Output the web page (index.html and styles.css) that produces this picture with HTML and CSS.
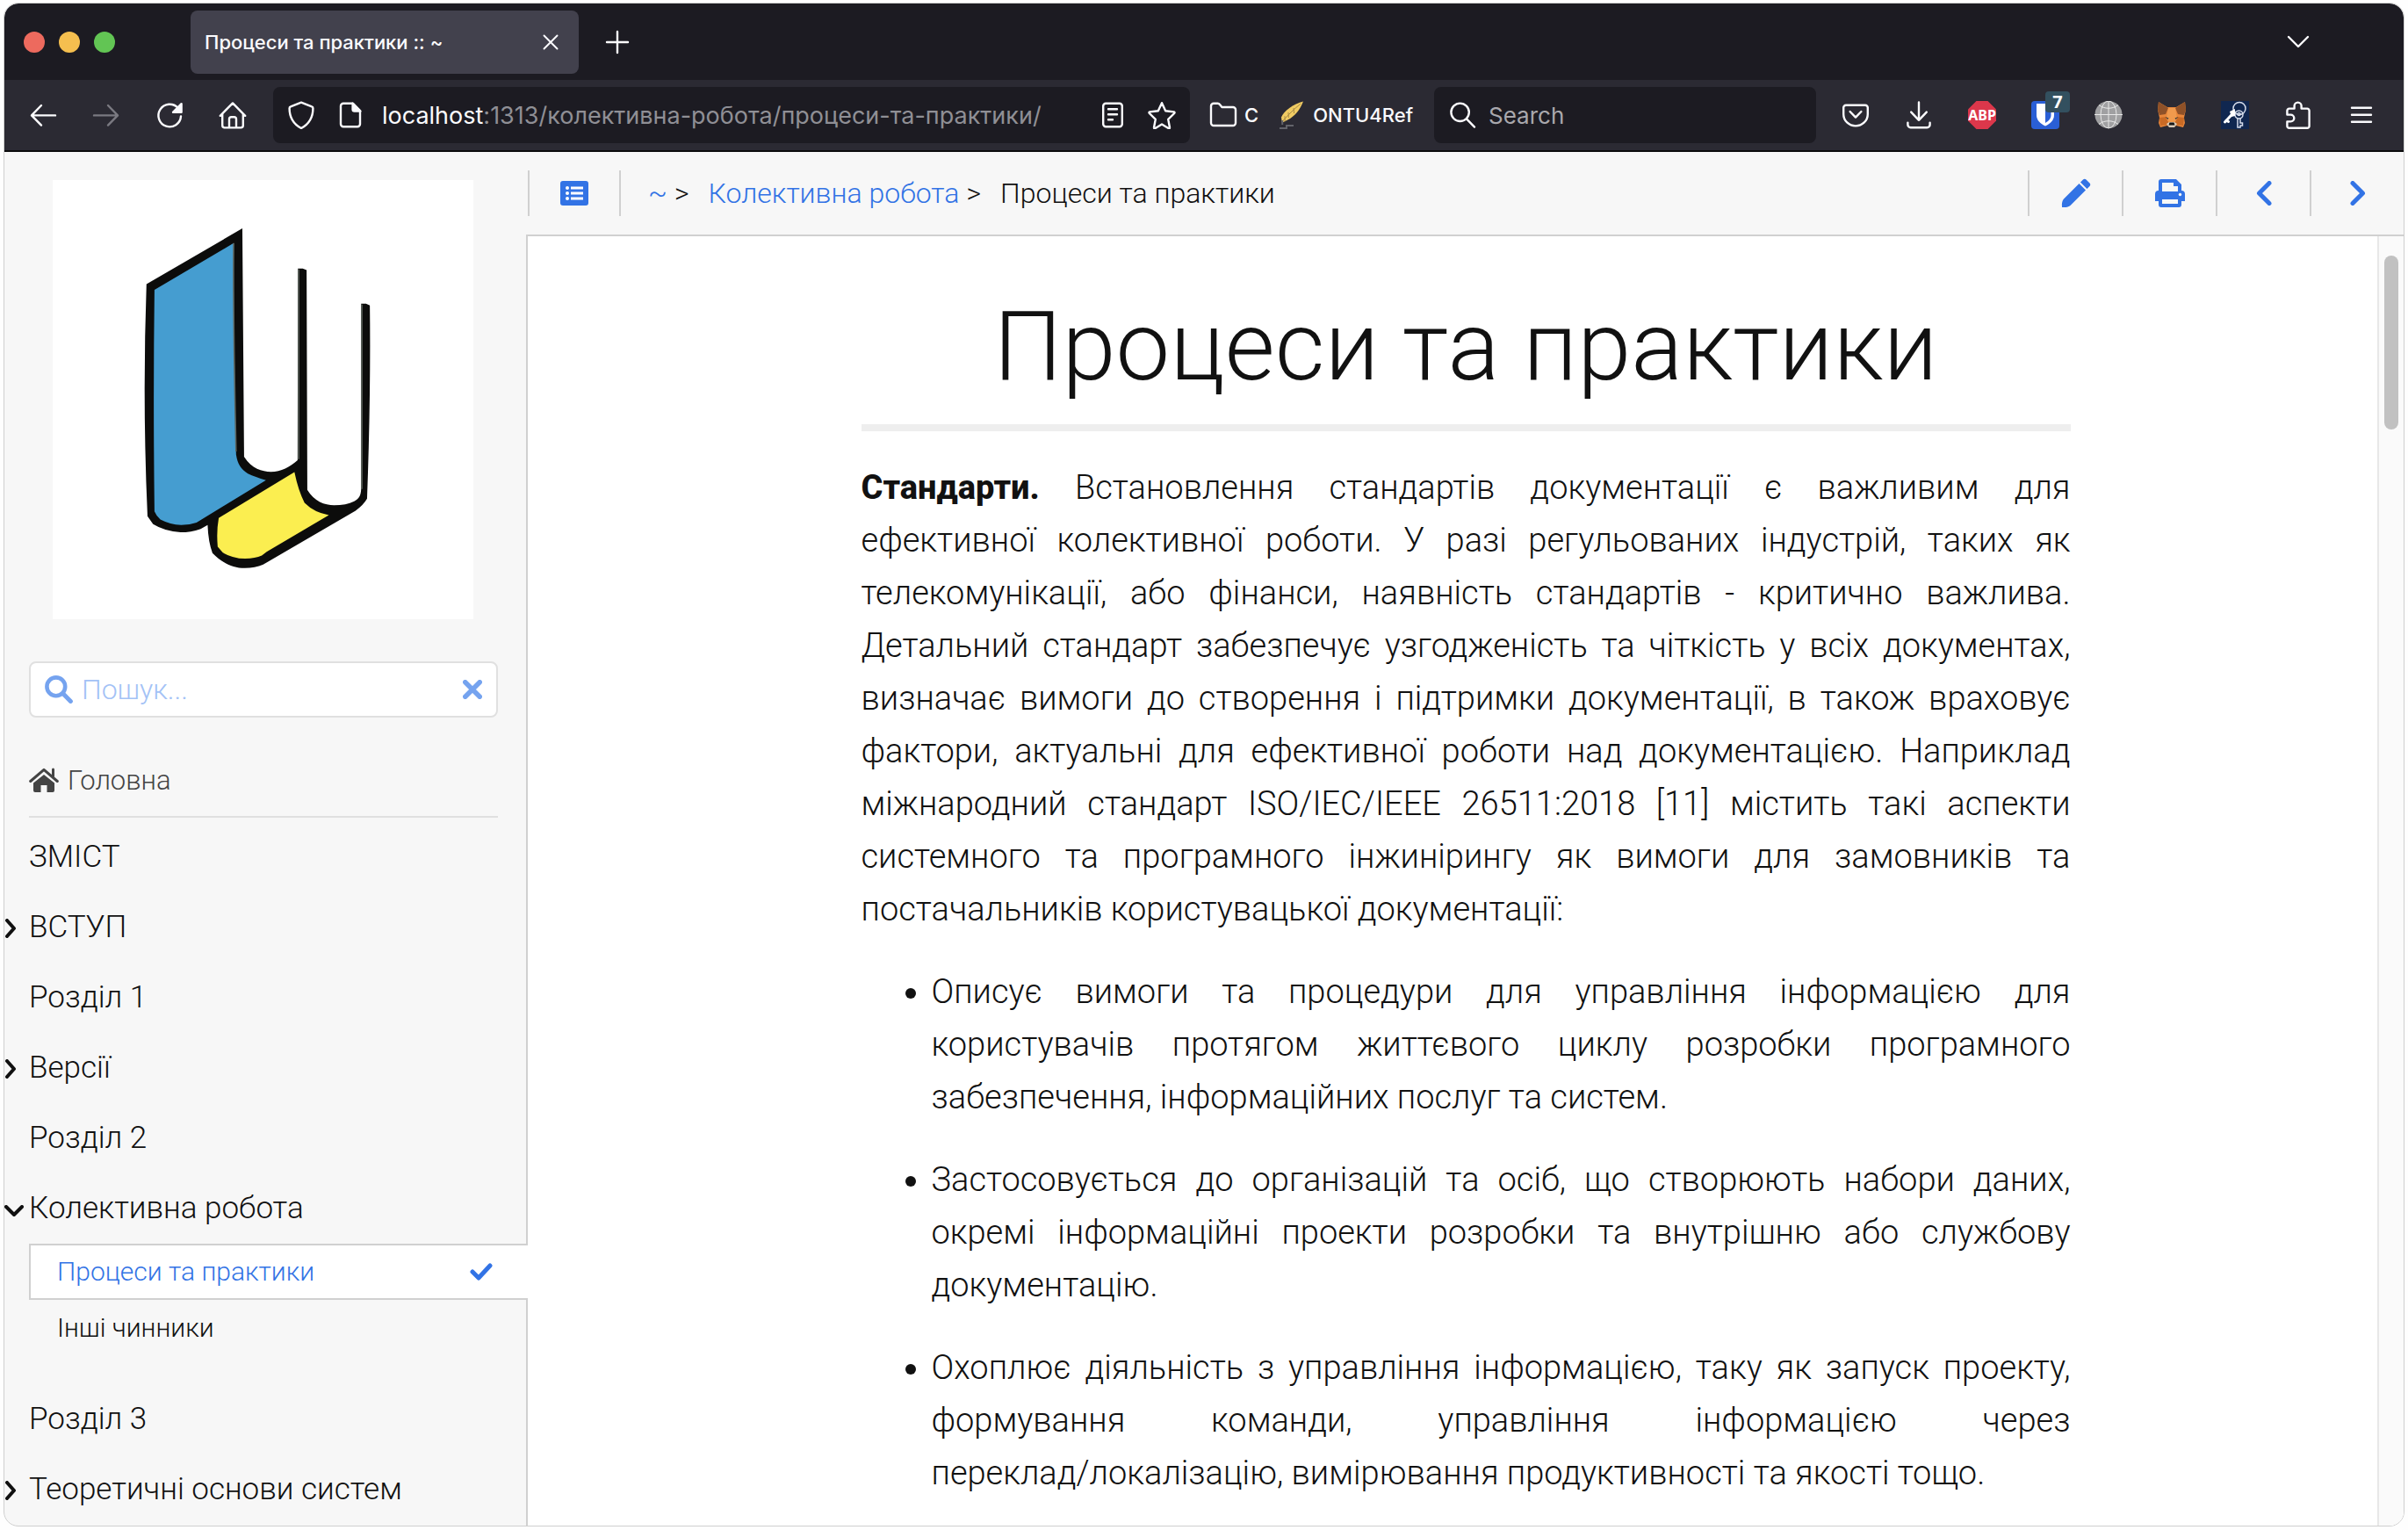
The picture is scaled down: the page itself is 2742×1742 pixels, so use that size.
FILE: index.html
```html
<!DOCTYPE html>
<html lang="uk">
<head>
<meta charset="utf-8">
<title>Процеси та практики :: ~</title>
<link rel="stylesheet" href="styles.css">
</head>
<body>
<div class="window">
  <header class="chrome">
    <div class="tabstrip">
      <div class="lights"><i class="light red"></i><i class="light amber"></i><i class="light green"></i></div>
      <div class="tab">
        <span class="tab-title">Процеси та практики :: ~</span>
        <button class="plain" aria-label="Close tab"><svg class="ico-s" viewBox="0 0 16 16"><path d="M3 3l10 10M13 3L3 13"/></svg></button>
      </div>
      <button class="plain newtab" aria-label="New tab"><svg class="ico" viewBox="0 0 16 16"><path d="M8 2v12M2 8h12"/></svg></button>
      <button class="plain alltabs" aria-label="List all tabs"><svg class="ico" viewBox="0 0 16 16"><path d="M2.500 5L8 10.500 13.500 5"/></svg></button>
    </div>
    <div class="toolbar">
      <button class="tool" aria-label="Back"><svg class="ico" viewBox="0 0 16 16"><path d="M7 2.500L1.500 8.200 7 13.800M1.500 8.200H15"/></svg></button>
      <button class="tool dim" aria-label="Forward" disabled><svg class="ico" viewBox="0 0 16 16"><path d="M9 2.500l5.500 5.700L9 13.800M14.500 8.200H1"/></svg></button>
      <button class="tool" aria-label="Reload"><svg class="ico" viewBox="0 0 16 16"><path d="M12.800 3.900A6.400 6.400 0 1 0 14.500 8.700"/><path class="fill" d="M14.800 1.600v4.800H10z"/></svg></button>
      <button class="tool" aria-label="Home"><svg class="ico" viewBox="0 0 16 16"><path d="M.9 8.400L8 1.200l7.100 7.200M2.100 7.500v6.400a1.300 1.300 0 0 0 1.300 1.300h9.200a1.300 1.300 0 0 0 1.300-1.300V7.500M6 15V10.300a1.200 1.200 0 0 1 1.200-1.200h1.600A1.200 1.200 0 0 1 10 10.300V15"/></svg></button>
      <div class="urlbar">
        <svg class="ico" viewBox="0 0 16 16"><path d="M8 .8l6 2.400a1 1 0 0 1 .7 1C14.700 9.500 12.500 13 8 15.500 3.500 13 1.300 9.500 1.300 4.200a1 1 0 0 1 .7-1z"/></svg>
        <svg class="ico" viewBox="0 0 16 16"><path d="M9.500 1.400H4a1.500 1.500 0 0 0-1.500 1.500v10.200A1.500 1.500 0 0 0 4 14.600h8a1.500 1.500 0 0 0 1.500-1.500V5.500z"/><path class="fill" d="M9.300 1.400l4.400 4.400H10.300a1 1 0 0 1-1-1z"/></svg>
        <div class="url" role="textbox" aria-label="Address" contenteditable="true" spellcheck="false"><b>localhost</b>:1313/колективна-робота/процеси-та-практики/</div>
        <svg class="ico" viewBox="0 0 16 16"><rect x="2.600" y="1.400" width="10.800" height="13.200" rx="1.500"/><path d="M5.500 4.600h5M5.500 7.600h5M5.500 10.600h2.500"/></svg>
        <svg class="ico" viewBox="0 0 16 16"><path d="M8 1.100l2.100 4.500 4.800.6c.4.100.5.500.2.800l-3.500 3.400.9 4.700c.1.400-.3.700-.6.500L8 13.200l-3.900 2.400c-.3.200-.7-.1-.6-.5l.9-4.700L.9 7c-.3-.3-.2-.7.2-.8l4.800-.6z"/></svg>
      </div>
      <div class="bookmarks">
        <a class="bookmark" href="#"><svg class="ico" viewBox="0 0 16 16"><path d="M1 12.500v-9.600A1.500 1.500 0 0 1 2.500 1.400h2.300c.5 0 .9.200 1.200.6L7.200 3.500h6.300A1.500 1.500 0 0 1 15 5v7.500a1.500 1.500 0 0 1-1.500 1.500h-11A1.500 1.500 0 0 1 1 12.500z"/></svg>C</a>
        <a class="bookmark feather" href="#"><svg class="ico-pic" viewBox="0 0 16 16"><path fill="#f0cb63" d="M14.500.2C9 1.600 3.200 5.600 2 9.300l.4 3.100 3-1.500C10 8.400 12.500 5 14.500.2z"/><path stroke="#a98b45" stroke-width=".5" fill="none" d="M2.600 11.600C6 8 9 4.700 13 1.600M6 6.500l.2 3M9 4l.3 3M4 8.600l.1 3"/><path stroke="#62636a" fill="none" d="M2.600 11v2.500M1 15.500h4v-1.500h4"/></svg>ONTU4Ref</a>
      </div>
      <label class="searchbar">
        <svg class="ico" viewBox="0 0 16 16"><circle cx="6.800" cy="6.400" r="5.100"/><path d="M10.500 10.200l4.500 4.600"/></svg>
        <input type="text" placeholder="Search" aria-label="Search">
      </label>
      <div class="extensions">
        <button class="tool" aria-label="Pocket"><svg class="ico" viewBox="0 0 16 16"><path d="M2.500 2.400h11A1.400 1.400 0 0 1 14.900 3.800V7.500A6.900 6.700 0 0 1 1.100 7.500V3.800a1.400 1.400 0 0 1 1.400-1.400zM4.800 6L8 9.300 11.200 6"/></svg></button>
        <button class="tool" aria-label="Downloads"><svg class="ico" viewBox="0 0 16 16"><path d="M8 .7v10.200M3.600 6.300L8 10.900l4.400-4.600M1.700 12.300v1.200a1.600 1.600 0 0 0 1.600 1.600h9.400a1.600 1.600 0 0 0 1.600-1.600v-1.200"/></svg></button>
        <button class="tool" aria-label="Adblock Plus"><svg class="ico-pic" viewBox="0 0 32 32"><path fill="#dc374b" d="M9.500 0h13L32 9.500v13L22.500 32h-13L0 22.500v-13z"/><text class="abp" x="16" y="22" text-anchor="middle">ABP</text></svg></button>
        <button class="tool vault" aria-label="Bitwarden"><svg class="ico-pic" viewBox="0 0 32 32"><rect width="32" height="32" rx="4" fill="#2a5fd6"/><path fill="#fff" d="M6 3h20v13c0 6-4.500 9.800-10 12.500C10.500 25.800 6 22 6 16z"/><path fill="#2a5fd6" d="M16 6.500h6.500V16c0 4-2.800 6.700-6.500 9z"/></svg><span class="badge">7</span></button>
        <button class="tool" aria-label="Language"><svg class="ico-pic" viewBox="0 0 32 32"><circle cx="16" cy="15.500" r="15.500" fill="#a0a0a2"/><g fill="none" stroke="#e8e8e8" stroke-width="1"><path d="M16 0v31M0 15.500h32M5 4.500c6 5 16 5 22 0M5 26.500c6-5 16-5 22 0"/><ellipse cx="16" cy="15.500" rx="9" ry="15.500"/></g></svg></button>
        <button class="tool" aria-label="MetaMask"><svg class="ico-pic" viewBox="0 0 32 32"><path fill="#e8863a" d="M1 1l10 6h10l10-6 1 9-2 9 1 6-2 5-8-2-3 2h-4l-3-2-8 2-2-5 1-6-2-9z"/><path fill="#8f5128" d="M1 1l11 7-3 7-7 1-2-6zM31 1L20 8l3 7 7 1 2-6z"/><path fill="#c96a25" d="M2 19l8-1 3 9-10 1zM30 19l-8-1-3 9 10 1z"/><path fill="#f09a4d" d="M12 8h8l2 12-3 5h-6l-3-5z"/><path fill="#d9cbb8" d="M10 26l3-2h6l3 2-3 4h-6z"/><path fill="#161616" d="M13.500 24.500h5l1 3h-7z"/><path fill="#3b3b3b" d="M8.500 18l4 1.500-1 1.500zM23.500 18l-4 1.500 1 1.500z"/></svg></button>
        <button class="tool" aria-label="Keys"><svg class="ico-pic" viewBox="0 0 32 32"><path fill="#102750" d="M0 0h32v32H0z"/><g fill="none" stroke="#d5dceb" stroke-width="1.500"><circle cx="21" cy="8.500" r="7"/><circle cx="20.500" cy="15.500" r="4.500"/><circle cx="20.500" cy="15" r="1.500"/><path d="M19 20v10h3v-2h2.500v-3H22v-5"/></g><path stroke="#fff" stroke-width="3" stroke-linecap="round" d="M4.500 24L15 12.500M6 22l2.500 1.500"/><path fill="#fff" d="M10 12l6-3v8l-4 1z"/></svg></button>
        <button class="tool" aria-label="Extensions"><svg class="ico" viewBox="0 0 16 16"><path d="M1.700 7.800V5.500a1.200 1.200 0 0 1 1.200-1.200H5.800V2.800a2 2 0 0 1 4 0V4.300h3.300a1.200 1.200 0 0 1 1.200 1.200v8.700a1.200 1.200 0 0 1-1.200 1.200H2.900a1.200 1.200 0 0 1-1.200-1.200V11.700h2a1.950 1.950 0 0 0 0-3.900z"/></svg></button>
        <button class="tool" aria-label="Menu"><svg class="ico" viewBox="0 0 16 16"><path d="M2.500 3.900h11M2.500 7.900h11M2.500 11.900h11"/></svg></button>
      </div>
    </div>
  </header>

  <div class="page">
    <aside class="sidebar">
      <a class="logo" href="#" aria-label="Logo">
        <svg viewBox="152 70 1211 1400" preserveAspectRatio="none">
          <path fill="#0c0c0b" d="M422 402L698 224L703 952C725 990 755 1000 780 1000C810 1000 835 984 857 963L858 352L872 352L883 357L885 1058C905 1095 935 1107 962 1107C985 1107 1005 1102 1020 1094C1035 1085 1039 1075 1040 1055V464L1054 464L1065 470Q1068 760 1057 1086Q1047 1106 1024 1124L758 1296Q735 1307 705 1307C670 1307 640 1290 612 1259Q600 1225 598 1170L578 1182Q550 1193 520 1193Q475 1190 441 1167L425 1142Q410 780 422 402Z"/>
          <path fill="#459dd0" d="M445 420L673 271Q672 500 680 945C684 975 694 992 714 1006Q735 1017 766 1027L566 1162Q545 1170 522 1170Q490 1168 462 1152Q450 1140 445 1126Q441 760 445 420Z"/>
          <path fill="none" stroke="#5a625b" stroke-width="4" d="M673 271Q671 500 680 935M860 355V960M1042 467V1055"/>
          <path fill="#fbee50" d="M848 1001L630 1147Q623 1190 627 1239L642 1258Q670 1276 706 1277Q735 1276 754 1267L768 1255L947 1138Q905 1130 877 1099Q859 1060 848 1001Z"/>
        </svg>
      </a>
      <div class="side-search">
        <svg class="fa" viewBox="0 0 16 16"><circle cx="6.400" cy="6.400" r="5.200" fill="none" stroke="currentColor" stroke-width="2.300"/><path d="M10.300 10.300l4.400 4.400" stroke="currentColor" stroke-width="2.500" stroke-linecap="round"/></svg>
        <input type="text" placeholder="Пошук..." aria-label="Пошук">
        <button class="plain clear" aria-label="Очистити"><svg class="fa-x" viewBox="0 0 16 16"><path d="M2 2l12 12M14 2L2 14" stroke="currentColor" stroke-width="4" stroke-linecap="round"/></svg></button>
      </div>
      <a class="home" href="#"><svg class="fa-home" viewBox="0 0 34 28"><path fill="currentColor" d="M17 8l12 9.500V26a2 2 0 0 1-2 2h-6.500v-8h-7v8H7a2 2 0 0 1-2-2V17.500z"/><path fill="none" stroke="currentColor" stroke-width="3" stroke-linecap="round" stroke-linejoin="round" d="M1.700 15.500L17 2.300l15.300 13.200M27.500 2v8"/></svg>Головна</a>
      <nav>
        <ul class="menu">
          <li><a href="#">ЗМІСТ</a></li>
          <li><svg class="caret" viewBox="0 0 12 22"><path d="M2 2l8 9-8 9"/></svg><a href="#">ВСТУП</a></li>
          <li><a href="#">Розділ 1</a></li>
          <li><svg class="caret" viewBox="0 0 12 22"><path d="M2 2l8 9-8 9"/></svg><a href="#">Версії</a></li>
          <li><a href="#">Розділ 2</a></li>
          <li><svg class="caret open" viewBox="0 0 22 14"><path d="M2 2l9 9 9-9"/></svg><a href="#">Колективна робота</a>
            <ul class="submenu">
              <li class="active"><a href="#">Процеси та практики</a><svg class="check" viewBox="0 0 26 20"><path d="M3 10l7 7L23 3"/></svg></li>
              <li><a href="#">Інші чинники</a></li>
            </ul>
          </li>
          <li><a href="#">Розділ 3</a></li>
          <li><svg class="caret" viewBox="0 0 12 22"><path d="M2 2l8 9-8 9"/></svg><a href="#">Теоретичні основи систем</a></li>
        </ul>
      </nav>
    </aside>

    <div class="content">
      <div class="topbar">
        <button class="plain act toc" aria-label="Зміст сторінки"><svg width="32" height="28" viewBox="0 0 32 28"><rect width="32" height="28" rx="3" fill="currentColor"/><g fill="#fff"><circle cx="8" cy="8" r="2"/><circle cx="8" cy="14" r="2"/><circle cx="8" cy="20" r="2"/><path d="M12 6.500h14v3H12zM12 12.500h14v3H12zM12 18.500h14v3H12z"/></g></svg></button>
        <nav class="crumbs"><a href="#">~</a><span>&gt;</span><a class="step" href="#">Колективна робота</a><span>&gt;</span><span class="step">Процеси та практики</span></nav>
        <div class="actions">
          <a class="act" href="#" aria-label="Редагувати"><svg width="34" height="34" viewBox="0 0 34 34"><path fill="currentColor" d="M1 33c-.5-5 .5-8 2-9.500L20.500 6l7.500 7.500L10.500 31C9 32.500 6 33.300 1 33zM22 4.500L25 1.500c1-1 2.500-1 3.500 0l4 4c1 1 1 2.500 0 3.500L29.500 12z"/></svg></a>
          <a class="act" href="#" aria-label="Друк"><svg width="34" height="34" viewBox="0 0 34 34"><path fill="currentColor" d="M4 14V4a3 3 0 0 1 3-3h17l6 6v7a4 4 0 0 1 4 4v8h-4v4a3 3 0 0 1-3 3H7a3 3 0 0 1-3-3v-4H0v-8a4 4 0 0 1 4-4z"/><path fill="#f7f7f7" d="M8 5h13v4h5v6H8zM8 24h18v5H8z"/><circle cx="28.500" cy="18.500" r="1.700" fill="#f7f7f7"/></svg></a>
          <a class="act" href="#" aria-label="Попередня"><svg class="arrow" viewBox="0 0 18 28"><path d="M15 2.500L3.500 14 15 25.500"/></svg></a>
          <a class="act" href="#" aria-label="Наступна"><svg class="arrow" viewBox="0 0 18 28"><path d="M3 2.500L14.500 14 3 25.500"/></svg></a>
        </div>
      </div>
      <main class="reader">
        <article>
          <h1>Процеси та практики</h1>
          <p><strong>Стандарти.</strong> Встановлення стандартів документації є важливим для ефективної колективної роботи. У разі регульованих індустрій, таких як телекомунікації, або фінанси, наявність стандартів - критично важлива. Детальний стандарт забезпечує узгодженість та чіткість у всіх документах, визначає вимоги до створення і підтримки документації, в також враховує фактори, актуальні для ефективної роботи над документацією. Наприклад міжнародний стандарт ISO/IEC/IEEE 26511:2018 [11] містить такі аспекти системного та програмного інжинірингу як вимоги для замовників та постачальників користувацької документації:</p>
          <ul>
            <li>Описує вимоги та процедури для управління інформацією для користувачів протягом життєвого циклу розробки програмного забезпечення, інформаційних послуг та систем.</li>
            <li>Застосовується до організацій та осіб, що створюють набори даних, окремі інформаційні проекти розробки та внутрішню або службову документацію.</li>
            <li>Охоплює діяльність з управління інформацією, таку як запуск проекту, формування команди, управління інформацією через <span class="keep">переклад/локалізацію,</span> вимірювання продуктивності та якості тощо.</li>
          </ul>
        </article>
        <div class="scrolltrack"><div class="thumb"></div></div>
      </main>
    </div>
  </div>
</div>
</body>
</html>
```
FILE: styles.css
```css
* { box-sizing: border-box; }
html, body { height: 100%; }
body {
  margin: 0;
  padding: 4px 5px;
  background: #fefefe;
  color: #111;
  font-family: Roboto, "Liberation Sans", sans-serif;
  font-weight: 350;
  overflow: hidden;
}
a { color: inherit; text-decoration: none; }
svg { display: block; flex: none; }
input { border: 0; background: none; padding: 0; outline: 0; font: inherit; color: inherit; min-width: 0; flex: 1; }
.plain, .tool { border: 0; background: none; padding: 0; color: inherit; display: flex; align-items: center; justify-content: center; }

.window {
  height: calc(100vh - 9px);
  display: flex;
  flex-direction: column;
  outline: 1px solid #cfcfcf;
  border-radius: 16px;
  overflow: hidden;
}

/* browser chrome */
.chrome { flex: none; font-family: Inter, sans-serif; font-weight: 400; color: #fbfbfe; background: #1c1b22; }
.tabstrip { height: 87px; display: flex; align-items: center; padding: 0 104px 0 22px; }
.lights { display: flex; gap: 16px; width: 190px; }
.light { width: 24px; height: 24px; border-radius: 50%; }
.red { background: #ed6a5e; }
.amber { background: #f5bf4f; }
.green { background: #62c554; }
.tab { width: 442px; height: 72px; display: flex; align-items: center; justify-content: space-between; padding: 0 20px 0 16px; border-radius: 8px; background: #42414d; font-size: 22px; font-weight: 500; }
.newtab { margin-left: 28px; }
.alltabs { margin-left: auto; }
.toolbar { height: 82px; display: flex; align-items: center; padding: 0 12px 0 8px; background: #2b2a33; border-bottom: 2px solid #0c0c0d; }
.tool { width: 72px; height: 64px; position: relative; flex: none; }
.dim { color: #7a7981; }
.ico { width: 32px; height: 32px; fill: none; stroke: currentColor; stroke-width: 1.2; stroke-linecap: round; stroke-linejoin: round; }
.ico .fill { fill: currentColor; }
.ico-s { width: 24px; height: 24px; fill: none; stroke: currentColor; stroke-width: 1.3; stroke-linecap: round; }
.ico-pic { width: 32px; height: 32px; }
.urlbar, .searchbar { height: 64px; display: flex; align-items: center; border-radius: 8px; background: #1c1b22; font-size: 26px; }
.urlbar { flex: 1; gap: 24px; margin-left: 10px; padding: 0 16px; }
.url { flex: 1; margin-left: -4px; white-space: nowrap; color: #8f8f95; outline: 0; font-size: 27px; }
.url b { font-weight: 400; color: #fbfbfe; }
.bookmarks { display: flex; gap: 22px; padding: 0 24px 0 22px; font-size: 22px; font-weight: 500; }
.bookmark { display: flex; align-items: center; gap: 8px; }
.searchbar { width: 435px; gap: 14px; padding: 0 16px; }
.searchbar input::placeholder { color: #a9a8ad; opacity: 1; }
.extensions { display: flex; margin-left: 9px; }
.abp { font: 700 16px "Noto Sans", sans-serif; fill: #fff; }
.badge { position: absolute; top: 5px; right: 8px; width: 28px; height: 24px; border-radius: 4px; background: #33505f; color: #fff; font: 700 20px/24px "Noto Sans", sans-serif; text-align: center; }

/* page */
.page { flex: 1; min-height: 0; display: flex; background: #f7f7f7; overflow: hidden; }
.sidebar { width: 594px; flex: none; padding: 32px 32px 0 28px; position: relative; z-index: 1; }
.logo { display: block; margin: 0 28px 0 27px; background: #fff; }
.logo svg { width: 100%; height: 500px; }
.side-search { height: 64px; margin-top: 48px; padding: 0 16px; display: flex; align-items: center; gap: 10px; border: 2px solid #e0e0e0; border-radius: 8px; background: #fff; color: #75a3ef; font-size: 32px; }
.side-search input::placeholder { color: #a3c2f6; opacity: 1; }
.fa { width: 32px; height: 32px; }
.fa-x { width: 22px; height: 22px; }
.home { display: flex; align-items: center; gap: 10px; height: 114px; padding-top: 30px; border-bottom: 2px solid #e0e0e0; color: #444; font-size: 31px; }
.fa-home { width: 34px; height: 28px; }
ul { margin: 0; padding: 0; list-style: none; }
.menu { padding-top: 5px; font-size: 35px; line-height: 80px; }
.menu > li { position: relative; }
.menu a { display: block; flex: 1; }
.caret { position: absolute; left: -28px; top: 30px; width: 14px; height: 22px; fill: none; stroke: #111; stroke-width: 4; stroke-linecap: round; stroke-linejoin: round; }
.caret.open { width: 22px; height: 14px; top: 36px; }
.submenu { font-size: 30px; line-height: 60px; padding-bottom: 32px; }
.submenu li { height: 64px; padding-left: 32px; display: flex; align-items: center; }
.submenu .active { margin-right: -34px; padding: 0 40px 0 30px; border: 2px solid #d0d0d0; border-right: 0; background: #fff; color: #3273e5; }
.check { width: 26px; height: 20px; fill: none; stroke: currentColor; stroke-width: 5; stroke-linecap: round; stroke-linejoin: round; }

.content { flex: 1; min-width: 0; display: flex; flex-direction: column; }
.topbar { height: 94px; flex: none; display: flex; align-items: center; padding-left: 2px; }
.act { width: 107px; height: 52px; display: flex; align-items: center; justify-content: center; border-left: 2px solid #d0d0d0; color: #3273e5; }
.toc { width: 106px; border-right: 2px solid #d0d0d0; }
.crumbs { flex: 1; display: flex; padding-left: 31px; font-size: 32px; }
.crumbs a { color: #3273e5; }
.crumbs span { margin-left: 8px; }
.crumbs .step { margin-left: 22px; }
.actions { display: flex; }
.arrow { width: 18px; height: 28px; fill: none; stroke: currentColor; stroke-width: 5; stroke-linecap: round; stroke-linejoin: round; }
.reader { flex: 1; min-height: 0; position: relative; overflow: hidden; border: 2px solid #d0d0d0; border-width: 2px 0 0 2px; background: #fff; }
article { max-width: 1377px; margin: 0 auto; padding-top: 56px; font-size: 38px; line-height: 60px; text-align: justify; }
h1 { margin: 0 0 34px; height: 166px; border-bottom: 8px solid #eee; font-size: 110px; line-height: 140px; font-weight: 350; text-align: center; }
p { margin: 0 0 34px; }
strong { font-weight: 800; }
article ul { padding-left: 80px; list-style: disc; }
article li { margin-bottom: 34px; }
.keep { white-space: nowrap; }
.scrolltrack { position: absolute; top: 0; right: 0; bottom: 0; width: 30px; padding: 22px 0 0 6px; border-left: 2px solid #e8e8e8; background: #fafafa; }
.thumb { width: 16px; height: 198px; border-radius: 8px; background: #c1c1c1; }
```
